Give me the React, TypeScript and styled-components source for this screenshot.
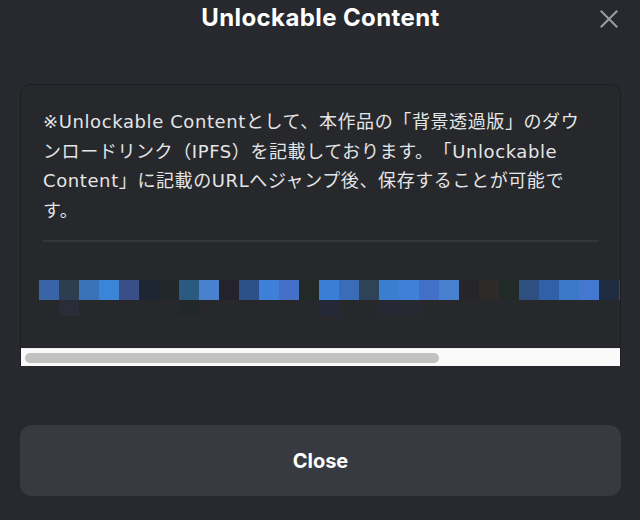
import React from "react";
import styled, {createGlobalStyle} from "styled-components";

const GlobalStyle = createGlobalStyle`
    html, body {
        margin: 0;
        padding: 0;
        background: #27292e;
    }
`;

// pixelated (redacted) link row, left to right
const linkCells = [
    "#3a64a8", "#2c3e50", "#3a72b8", "#3a85d8", "#3a4e88", "#1e2533", "#22282a",
    "#2a5a80", "#4a80d0", "#24232d", "#2e5088", "#3e80d8", "#4470c8", "#222a28",
    "#3a7ed8", "#3a6cb8", "#2e4258", "#3a7ed0", "#4080d8", "#4270c8", "#4880d0",
    "#26262a", "#2e2a2a", "#222a28", "#2e5080", "#3060a8", "#3a78c8", "#4478d0",
    "#202c40", "#2a4a78", "#3a70c0", "#27292e", "#27292e", "#27292e",
];

const shadowCells = [
    "transparent", "#2a2c38", "transparent", "transparent", "transparent", "transparent", "transparent",
    "#22272a", "transparent", "transparent", "transparent", "transparent", "transparent", "transparent",
    "#252836", "transparent", "transparent", "#262934", "#262832",
];

const CloseIcon = () => (
    <svg width="18" height="18" viewBox="0 0 18 18" fill="none">
        <path d="M1.5 1.5 16.5 16.5M16.5 1.5 1.5 16.5" stroke="#9b9da3" strokeWidth="2" strokeLinecap="square"/>
    </svg>
);

const App = () => {
    return (<Page>
        <GlobalStyle/>
        <Header>
            <span/>
            <Title>Unlockable Content</Title>
            <IconButton aria-label="close">
                <CloseIcon/>
            </IconButton>
        </Header>

        <Card>
            <Viewport>
                <Body>
                    <Description>
                        ※Unlockable Contentとして、本作品の「背景透過版」のダウ<br/>
                        ンロードリンク（IPFS）を記載しております。「Unlockable<br/>
                        Content」に記載のURLへジャンプ後、保存することが可能で<br/>
                        す。
                    </Description>
                    <Divider/>
                    <LinkRow>
                        <CellRow>
                            {linkCells.map((c, i) => <Cell key={i} $color={c}/>)}
                        </CellRow>
                        <CellRow>
                            {shadowCells.map((c, i) => <Cell key={i} $color={c} $short/>)}
                        </CellRow>
                    </LinkRow>
                </Body>
            </Viewport>
            <ScrollTrack>
                <ScrollThumb style={{width: `${(600 / 857) * 100}%`}}/>
            </ScrollTrack>
        </Card>

        <CloseButton>Close</CloseButton>
    </Page>)
};

const Page = styled.div`
    width: 640px;
    height: 520px;
    box-sizing: border-box;
    padding: 0 19px 0 20px;
    display: flex;
    flex-direction: column;
    font-family: "Inter", "Noto Sans CJK JP", sans-serif;
    overflow: hidden;
`;

const Header = styled.div`
    display: grid;
    grid-template-columns: 1fr auto 1fr;
    align-items: center;
    height: 36px;
`;

const Title = styled.h1`
    margin: 0;
    font-size: 24px;
    font-weight: 700;
    line-height: 36px;
    letter-spacing: 0.4px;
    color: #ffffff;
`;

const IconButton = styled.button`
    justify-self: end;
    width: 24px;
    height: 24px;
    padding: 0;
    margin-top: 2px;
    border: none;
    background: none;
    display: flex;
    align-items: center;
    justify-content: center;
    cursor: pointer;
`;

const Card = styled.div`
    margin-top: 48px;
    border: 1px solid #1d1f23;
    border-bottom: none;
    border-radius: 10px 10px 0 0;
    background: #26282c;
    overflow: hidden;
`;

const Viewport = styled.div`
    overflow: hidden;
`;

const Body = styled.div`
    padding: 22px 22px 32px;
    width: 556px;
`;

const Description = styled.p`
    margin: 0;
    font-family: "DejaVu Sans", "Noto Sans CJK JP", sans-serif;
    font-size: 18px;
    line-height: 29.5px;
    letter-spacing: 0.6px;
    text-spacing-trim: space-all;
    white-space: nowrap;
    color: #e4e5e7;
`;

const Divider = styled.div`
    height: 2px;
    margin-top: 15px;
    background: #34363b;
`;

const LinkRow = styled.div`
    margin: 38px 0 0 -4px;
    width: 857px;
`;

const CellRow = styled.div`
    display: flex;
`;

const Cell = styled.div<{ $color: string; $short?: boolean }>`
    flex: 0 0 20px;
    height: ${({$short}) => $short ? 16 : 20}px;
    background: ${({$color}) => $color};
`;

const ScrollTrack = styled.div`
    height: 18px;
    box-sizing: border-box;
    padding: 4px 4px;
    background: #fafafa;
    border-top: 1px solid #ececec;
`;

const ScrollThumb = styled.div`
    height: 10px;
    border-radius: 5px;
    background: #c1c1c1;
`;

const CloseButton = styled.button`
    margin-top: 59px;
    height: 71px;
    border: none;
    border-radius: 12px;
    background: #383a41;
    color: #ffffff;
    font-family: "Inter", sans-serif;
    font-size: 20px;
    font-weight: 700;
    cursor: pointer;
`;

export default App;
